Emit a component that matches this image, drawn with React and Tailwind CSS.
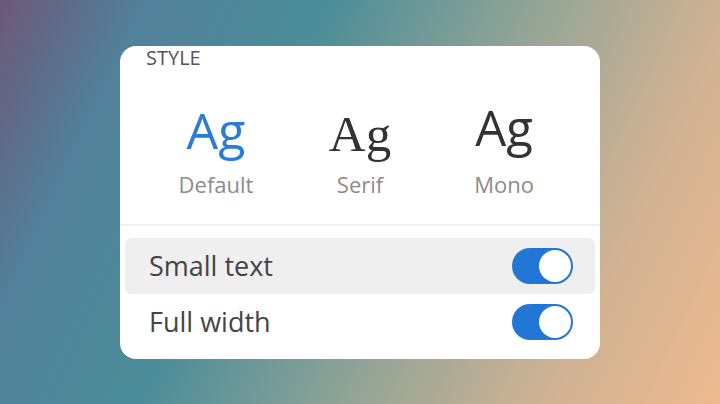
import { useState } from "react";

const fonts = [
  { name: "Default", cls: "font-['Open_Sans',sans-serif] font-normal text-[50px] leading-[56px] text-[#2b7cd6]" },
  { name: "Serif", cls: "font-['Liberation_Serif',serif] font-normal text-[51px] leading-[64px] text-[#333]" },
  { name: "Mono", cls: "font-['Open_Sans',sans-serif] font-normal text-[49px] leading-[50px] text-[#333]" },
];

function Toggle({ on, onClick }) {
  return (
    <button
      onClick={onClick}
      className={`w-[61px] h-[36px] rounded-full p-[2px] flex ${on ? "bg-[#2176d6] justify-end" : "bg-[#ccc] justify-start"}`}
    >
      <span className="w-[32px] h-[32px] rounded-full bg-white" />
    </button>
  );
}

export default function App() {
  const [small, setSmall] = useState(true);
  const [full, setFull] = useState(true);

  return (
    <div className="w-full h-[404px] flex items-center justify-center bg-[linear-gradient(115deg,#6c5878_0%,#52809a_16%,#4b8d98_36%,#95a596_60%,#cfb294_80%,#edb98f_100%)] font-['Open_Sans',sans-serif]">
      <div className="w-[480px] h-[313px] bg-white rounded-[16px] pt-[2px] flex flex-col">
        <div className="px-[26px] text-[20px] leading-[20px] text-[#555]">STYLE</div>

        {/* font choices */}
        <div className="grid grid-cols-3 px-[24px] mt-[34px]">
          {fonts.map(f => (
            <div key={f.name} className="flex flex-col items-center">
              <div className={`h-[56px] ${f.cls}`}>Ag</div>
              <div className="mt-[14px] text-[22px] leading-[24px] text-[#8c8c8c]">{f.name}</div>
            </div>
          ))}
        </div>

        <div className="mt-[28px] h-[2px] bg-[#f2f2f2]" />

        {/* toggles */}
        <div className="mt-[12px] mx-[5px] flex flex-col">
          <div className="h-[56px] rounded-[6px] bg-[#efefef] flex items-center justify-between pl-[24px] pr-[22px]">
            <span className="text-[27px] leading-[56px] text-[#444]">Small text</span>
            <Toggle on={small} onClick={() => setSmall(!small)} />
          </div>
          <div className="h-[56px] flex items-center justify-between pl-[24px] pr-[22px]">
            <span className="text-[27px] leading-[56px] text-[#444]">Full width</span>
            <Toggle on={full} onClick={() => setFull(!full)} />
          </div>
        </div>
      </div>
    </div>
  );
}
